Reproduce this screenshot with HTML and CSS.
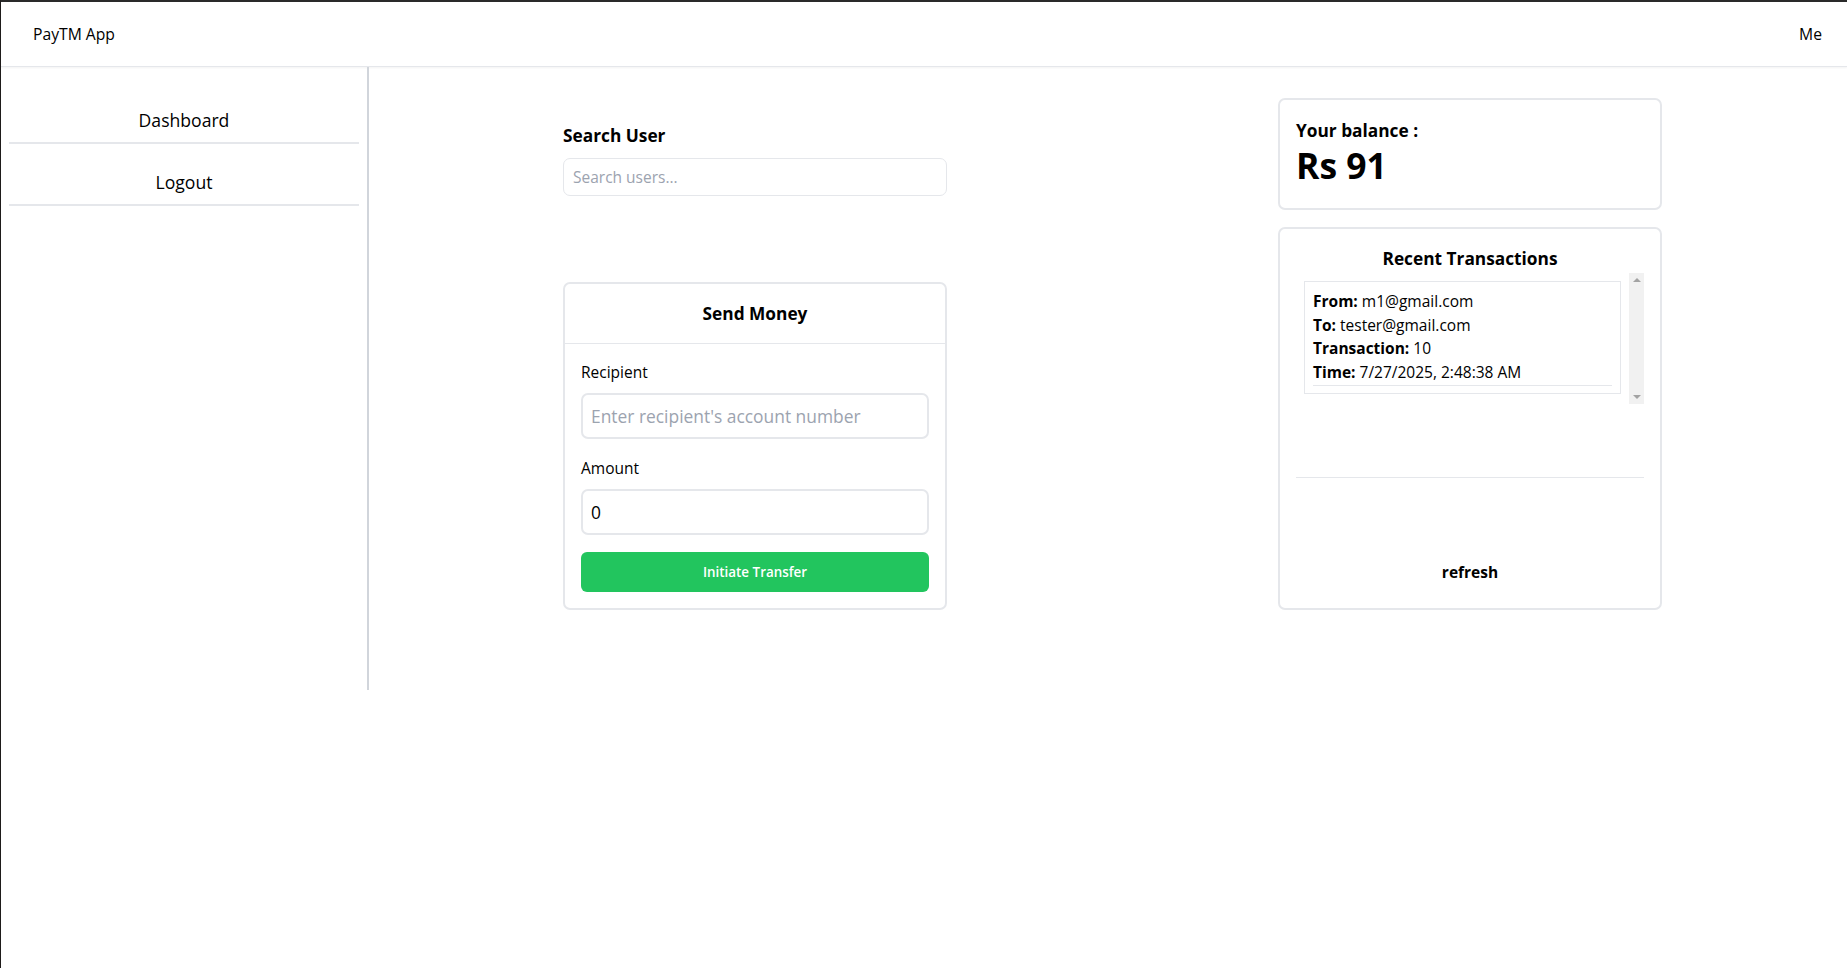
FILE: index.html
```html
<!DOCTYPE html>
<html lang="en">
<head>
<meta charset="utf-8">
<title>PayTM App</title>
<link rel="stylesheet" href="styles.css">
</head>
<body>
<header class="topbar">
  <div class="brand">PayTM App</div>
  <div class="me">Me</div>
</header>
<div class="layout">
  <aside class="sidebar">
    <div class="nav-item">Dashboard</div>
    <div class="nav-item">Logout</div>
  </aside>
  <main class="main">
    <section class="col-left">
      <div class="search">
        <h2 class="section-title">Search User</h2>
        <input class="search-input" type="text" placeholder="Search users...">
      </div>
      <div class="card send-card">
        <div class="card-head">Send Money</div>
        <div class="card-body">
          <label class="field-label">Recipient</label>
          <input class="field-input" type="text" placeholder="Enter recipient's account number">
          <label class="field-label next">Amount</label>
          <input class="field-input" type="text" value="0">
          <button class="btn-green">Initiate Transfer</button>
        </div>
      </div>
    </section>
    <section class="col-right">
      <div class="card balance-card">
        <div class="balance-label">Your balance :</div>
        <div class="balance-value">Rs 91</div>
      </div>
      <div class="card tx-card">
        <div class="tx-title">Recent Transactions</div>
        <div class="tx-scroll">
          <div class="tx-list">
            <div class="tx-box">
              <div class="tx-item">
                <div><b>From:</b> m1@gmail.com</div>
                <div><b>To:</b> tester@gmail.com</div>
                <div><b>Transaction:</b> 10</div>
                <div><b>Time:</b> 7/27/2025, 2:48:38 AM</div>
              </div>
            </div>
          </div>
          <div class="fake-scrollbar">
            <span class="arrow up"></span>
            <span class="arrow down"></span>
          </div>
        </div>
        <div class="tx-divider"></div>
        <div class="tx-refresh">refresh</div>
      </div>
    </section>
  </main>
</div>
</body>
</html>
```
FILE: styles.css
```css
* { box-sizing: border-box; }
html, body { margin: 0; padding: 0; }
body {
  min-height: 100vh;
  background: #fff;
  color: #000;
  font-family: "Open Sans", "Noto Sans", sans-serif;
  font-size: 15.5px;
  border-top: 2px solid #2a2a2a;
  border-left: 1px solid #1e1b1a;
}
.topbar {
  height: 65px;
  display: flex;
  align-items: center;
  justify-content: space-between;
  padding: 0 25px 0 32px;
  border-bottom: 1px solid #e5e7eb;
  box-shadow: 0 1px 2px rgba(0,0,0,0.05);
  font-size: 15.7px;
}
.layout { display: flex; align-items: flex-start; }
.sidebar {
  width: 368px;
  height: 623px;
  border-right: 2px solid #d1d5db;
  padding: 15px 8px 0 8px;
  flex: none;
}
.nav-item {
  margin-top: 16px;
  padding: 8px 0 8px;
  line-height: 28px;
  font-size: 17.6px;
  text-align: center;
  border-bottom: 2px solid #e5e7eb;
}
.main {
  flex: 1;
  display: flex;
  padding-left: 194px;
  gap: 331px;
}
.col-left { width: 384px; padding-top: 55px; }
.col-right { width: 384px; padding-top: 31px; }
.section-title {
  margin: 0 0 8px;
  font-size: 17.3px;
  line-height: 28px;
  font-weight: 700;
}
.search-input {
  display: block;
  width: 384px;
  height: 38px;
  border: 1px solid #e5e7eb;
  border-radius: 7px;
  padding: 0 9px;
  font-family: inherit;
  font-size: 15.5px;
  color: #000;
  outline: none;
}
.search-input::placeholder, .field-input::placeholder { color: #9ca3af; }
.card {
  border: 2px solid #e5e7eb;
  border-radius: 7px;
  background: #fff;
}
.send-card { margin-top: 86px; }
.card-head {
  padding: 16px 0 15px;
  line-height: 28px;
  font-size: 17.3px;
  font-weight: 700;
  text-align: center;
  border-bottom: 1px solid #e5e7eb;
}
.card-body { padding: 16px 16px 16px; display: flex; flex-direction: column; }
.field-label { display: block; line-height: 24px; font-size: 15.5px; margin-bottom: 9px; }
.field-label.next { margin-top: 17px; }
.field-input {
  display: block;
  width: 100%;
  height: 46px;
  border: 2px solid #e5e7eb;
  border-radius: 7px;
  padding: 0 8px;
  font-family: inherit;
  font-size: 17.4px;
  color: #000;
  outline: none;
}
.btn-green {
  margin-top: 17px;
  height: 40px;
  border: none;
  border-radius: 6px;
  background: #22c55e;
  color: #fff;
  font-family: inherit;
  font-size: 13.4px;
  font-weight: 600;
}
.balance-card { padding: 17px 16px 22px; height: 112px; }
.balance-label { font-size: 17.3px; line-height: 28px; font-weight: 700; }
.balance-value { font-size: 35.5px; line-height: 40px; font-weight: 700; }
.tx-card { margin-top: 17px; padding: 16px 16px 18px; display: flex; flex-direction: column; }
.tx-title { text-align: center; font-size: 17.3px; line-height: 28px; font-weight: 700; }
.tx-scroll { display: flex; height: 131px; }
.tx-list { flex: 1; padding: 8px; }
.tx-box { border: 1px solid #e5e7eb; padding: 8px 8px 7px; }
.tx-item { border-bottom: 1px solid #e5e7eb; line-height: 23.7px; font-size: 15.5px; }
.tx-item b { font-weight: 700; }
.fake-scrollbar {
  width: 15px;
  flex: none;
  background: #f1f1f1;
  display: flex;
  flex-direction: column;
  justify-content: space-between;
  align-items: center;
  padding: 5px 0;
}
.arrow { width: 0; height: 0; border-left: 4px solid transparent; border-right: 4px solid transparent; }
.arrow.up { border-bottom: 4px solid #a3a3a3; }
.arrow.down { border-top: 4px solid #a3a3a3; }
.tx-divider { margin-top: 73px; height: 1px; background: #e5e7eb; }
.tx-refresh {
  margin-top: 76px;
  padding: 6px 0;
  line-height: 24px;
  text-align: center;
  font-weight: 700;
  font-size: 15.5px;
}
```
